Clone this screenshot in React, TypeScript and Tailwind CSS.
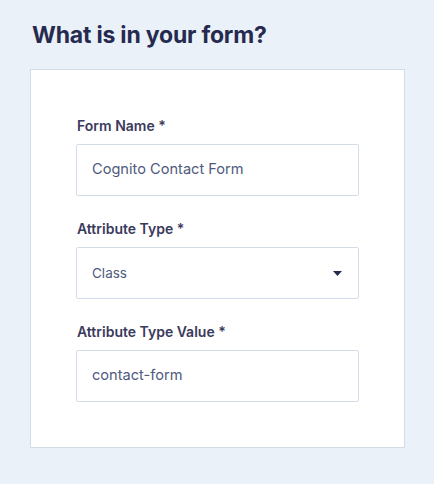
import React from 'react';

const Field = ({ label, children }: { label: string; children: React.ReactNode }) => (
  <div className="flex flex-col">
    <label className="text-[14px] font-semibold leading-[18px] text-[#3a3a5c] mb-[9px] ml-[1px]">{label}</label>
    {children}
  </div>
);

export default function App() {
  return (
    <div className="w-[434px] h-[484px] bg-[#eaf1f8] pl-[30px] pt-[21px] font-['Inter',sans-serif]">
      <h1 className="text-[23px] font-bold leading-[28px] text-[#262a4f] ml-[2px] tracking-[-0.2px]">What is in your form?</h1>

      <div className="mt-[20px] w-[375px] h-[379px] bg-white border border-[#d3dde9] pl-[45px] pr-[45px] pt-[47px] flex flex-col gap-[24px]">
        <Field label="Form Name *">
          <div className="h-[52px] border border-[#d3dde9] rounded-[2px] flex items-center px-[15px] text-[14.6px] text-[#4f5a7e]">
            Cognito Contact Form
          </div>
        </Field>

        <Field label="Attribute Type *">
          <div className="h-[52px] border border-[#d3dde9] rounded-[2px] flex items-center justify-between pl-[15px] pr-[16px] text-[13.5px] text-[#4f5a7e]">
            <span>Class</span>
            <svg width="9" height="5" viewBox="0 0 9 5">
              <path d="M0 0 L9 0 L4.5 5 Z" fill="#262a4f" />
            </svg>
          </div>
        </Field>

        <Field label="Attribute Type Value *">
          <div className="h-[52px] border border-[#d3dde9] rounded-[2px] flex items-center px-[15px] text-[14.6px] text-[#4f5a7e]">
            contact-form
          </div>
        </Field>
      </div>
    </div>
  );
}
